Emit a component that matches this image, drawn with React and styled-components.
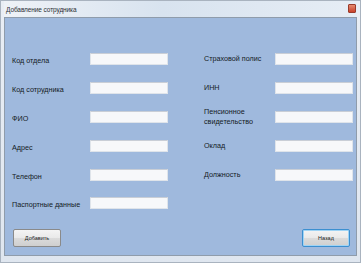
import React from 'react';
import styled, { createGlobalStyle } from 'styled-components';

const GlobalStyle = createGlobalStyle`
  html, body { margin: 0; padding: 0; background: #ffffff; }
  body { font-family: "Liberation Sans", Arial, sans-serif; }
`;

const Window = styled.div`
  width: 361px;
  height: 263px;
  box-sizing: border-box;
  display: flex;
  flex-direction: column;
  background: linear-gradient(180deg, #e9eef5 0%, #dfe6ef 100%);
  border: 1px solid #a9b3bf;
  padding: 0 3px 6px 3px;
`;

const TitleBar = styled.div`
  height: 16px;
  display: flex;
  align-items: center;
  justify-content: space-between;
  padding: 0 1px 0 2px;
  background: linear-gradient(90deg, #eef2f7 0%, #d8e3ef 45%, #e6edf5 100%);
`;

const Title = styled.span`
  font-size: 6.5px;
  color: #2a2f36;
  letter-spacing: -0.1px;
`;

const CloseButton = styled.div`
  width: 6px;
  height: 7px;
  background: linear-gradient(180deg, #e58a6f 0%, #c9412a 100%);
  border: 1px solid #9a3a2a;
  border-radius: 1px;
  margin-top: -2px;
`;

const Client = styled.div`
  flex: 1;
  display: flex;
  flex-direction: column;
  justify-content: space-between;
  background: #9fb9dd;
  border: 1px solid #8f9cab;
  padding: 27px 4px 8px 7px;
`;

const Columns = styled.div`
  display: grid;
  grid-template-columns: 156px 149px;
  column-gap: 36px;
`;

const Column = styled.div`
  display: flex;
  flex-direction: column;
`;

const Row = styled.div`
  height: 28.8px;
  display: grid;
  grid-template-columns: ${p => p.$label}px 78px;
  align-items: center;
`;

const Label = styled.span`
  font-size: 7.2px;
  line-height: 10px;
  color: #141b24;
  padding-top: ${p => p.$drop}px;
`;

const Input = styled.div`
  height: 10px;
  background: #f7f8fa;
  border: 1px solid #dfe4ea;
  border-top-color: #c9ced6;
`;

const Buttons = styled.div`
  display: flex;
  justify-content: space-between;
  padding: 0 2px 0 1px;
`;

const Button = styled.div`
  width: 46px;
  height: 16px;
  display: flex;
  align-items: center;
  justify-content: center;
  font-size: 5.5px;
  color: #222;
  border-radius: 2px;
  background: linear-gradient(180deg, #f4f4f4 0%, #e9e9e9 50%, #dbdbdb 51%, #cfcfcf 100%);
  border: 1px solid ${p => (p.$focused ? '#3c8fd0' : '#8a8a8a')};
  box-shadow: ${p => (p.$focused ? 'inset 0 0 0 1px #9fd4f5' : 'none')};
`;

const leftFields = ['Код отдела', 'Код сотрудника', 'ФИО', 'Адрес', 'Телефон', 'Паспортные данные'];
const rightFields = ['Страховой полис', 'ИНН', 'Пенсионное свидетельство', 'Оклад', 'Должность'];

export default function App() {
  return (
    <>
      <GlobalStyle />
      <Window>
        <TitleBar>
          <Title>Добавление сотрудника</Title>
          <CloseButton />
        </TitleBar>
        <Client>
          <Columns>
            <Column>
              {leftFields.map(f => (
                <Row key={f} $label={78}>
                  <Label $drop={4}>{f}</Label>
                  <Input />
                </Row>
              ))}
            </Column>
            <Column>
              {rightFields.map(f => (
                <Row key={f} $label={71}>
                  <Label $drop={0}>{f}</Label>
                  <Input />
                </Row>
              ))}
            </Column>
          </Columns>
          <Buttons>
            <Button>Добавить</Button>
            <Button $focused>Назад</Button>
          </Buttons>
        </Client>
      </Window>
    </>
  );
}
